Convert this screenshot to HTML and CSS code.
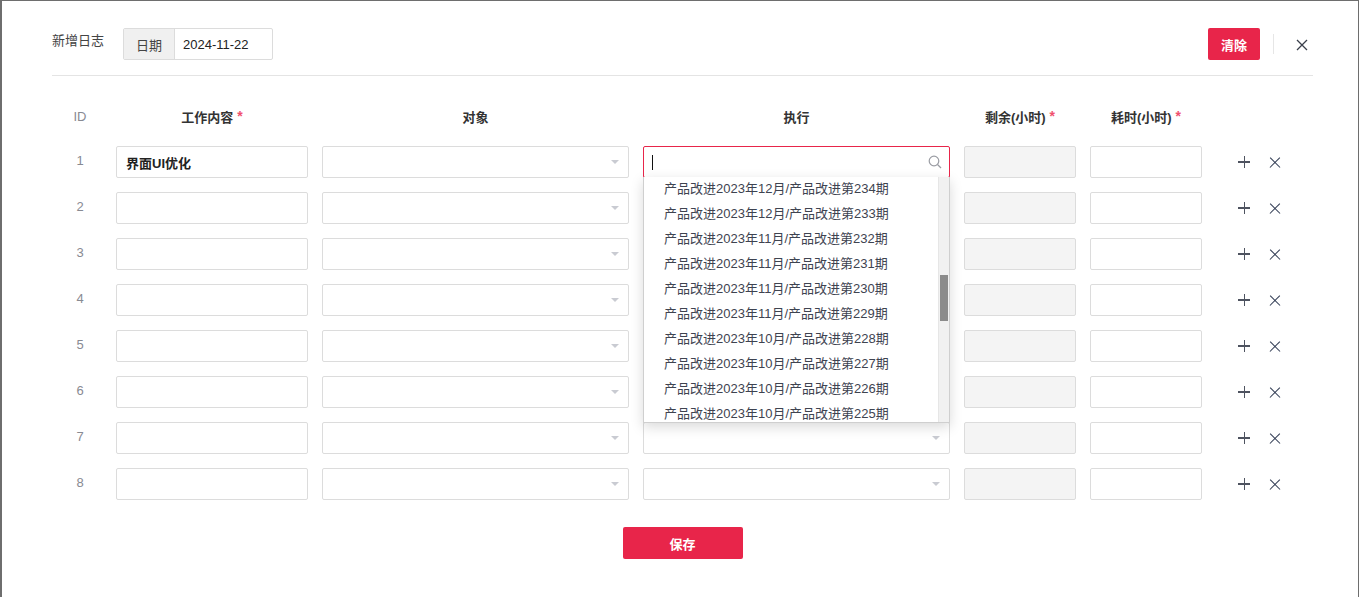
FILE: index.html
```html
<!DOCTYPE html>
<html lang="zh-CN">

<head>
  <meta charset="UTF-8" />
  <title>新增日志</title>
  <meta name="viewport" content="width=device-width, initial-scale=1.0" />
  <link rel="stylesheet" href="styles.css">
</head>

<body>
  <div class="dialog">
    <!-- 顶部：标题 + 日期 + 清除 -->
    <div class="dialog-head">
      <span class="title">新增日志</span>
      <div class="date-group">
        <span class="date-label">日期</span>
        <span class="date-value">2024-11-22</span>
      </div>
      <div class="head-actions">
        <button class="btn-red btn-clear">清除</button>
        <span class="head-sep"></span>
        <button class="icon-btn close-btn" title="关闭">
          <svg width="12" height="12" viewBox="0 0 12 12"><path d="M1 1L11 11M11 1L1 11" stroke="#3a3f4b" stroke-width="1.3" fill="none"/></svg>
        </button>
      </div>
    </div>

    <div class="log-table">
      <div class="th th-id">ID</div>
      <div class="th">工作内容 <i class="req">*</i></div>
      <div class="th">对象</div>
      <div class="th">执行</div>
      <div class="th">剩余(小时) <i class="req">*</i></div>
      <div class="th">耗时(小时) <i class="req">*</i></div>
      <div class="th"></div>

      <!-- row 1 -->
      <div class="td-id">1</div>
      <div class="field field-text">界面UI优化</div>
      <div class="field select"><span class="caret"></span></div>
      <div class="exec-cell">
        <div class="field search-box">
          <span class="text-cursor"></span>
          <svg class="search-icon" width="14" height="14" viewBox="0 0 14 14"><circle cx="6" cy="6" r="4.8" stroke="#9a9ca3" stroke-width="1.2" fill="none"/><path d="M9.5 9.5L13 13" stroke="#9a9ca3" stroke-width="1.3"/></svg>
        </div>
        <!-- 执行下拉 -->
        <div class="dropdown">
          <ul class="dropdown-list">
            <li>产品改进2023年12月/产品改进第234期</li>
            <li>产品改进2023年12月/产品改进第233期</li>
            <li>产品改进2023年11月/产品改进第232期</li>
            <li>产品改进2023年11月/产品改进第231期</li>
            <li>产品改进2023年11月/产品改进第230期</li>
            <li>产品改进2023年11月/产品改进第229期</li>
            <li>产品改进2023年10月/产品改进第228期</li>
            <li>产品改进2023年10月/产品改进第227期</li>
            <li>产品改进2023年10月/产品改进第226期</li>
            <li>产品改进2023年10月/产品改进第225期</li>
          </ul>
          <div class="scroll-track"><div class="scroll-thumb"></div></div>
        </div>
      </div>
      <div class="field readonly"></div>
      <div class="field"></div>
      <div class="row-actions"><span class="ico-plus"></span><span class="ico-del"></span></div>

      <!-- row 2 -->
      <div class="td-id">2</div>
      <div class="field"></div>
      <div class="field select"><span class="caret"></span></div>
      <div class="field select"><span class="caret"></span></div>
      <div class="field readonly"></div>
      <div class="field"></div>
      <div class="row-actions"><span class="ico-plus"></span><span class="ico-del"></span></div>

      <!-- row 3 -->
      <div class="td-id">3</div>
      <div class="field"></div>
      <div class="field select"><span class="caret"></span></div>
      <div class="field select"><span class="caret"></span></div>
      <div class="field readonly"></div>
      <div class="field"></div>
      <div class="row-actions"><span class="ico-plus"></span><span class="ico-del"></span></div>

      <!-- row 4 -->
      <div class="td-id">4</div>
      <div class="field"></div>
      <div class="field select"><span class="caret"></span></div>
      <div class="field select"><span class="caret"></span></div>
      <div class="field readonly"></div>
      <div class="field"></div>
      <div class="row-actions"><span class="ico-plus"></span><span class="ico-del"></span></div>

      <!-- row 5 -->
      <div class="td-id">5</div>
      <div class="field"></div>
      <div class="field select"><span class="caret"></span></div>
      <div class="field select"><span class="caret"></span></div>
      <div class="field readonly"></div>
      <div class="field"></div>
      <div class="row-actions"><span class="ico-plus"></span><span class="ico-del"></span></div>

      <!-- row 6 -->
      <div class="td-id">6</div>
      <div class="field"></div>
      <div class="field select"><span class="caret"></span></div>
      <div class="field select"><span class="caret"></span></div>
      <div class="field readonly"></div>
      <div class="field"></div>
      <div class="row-actions"><span class="ico-plus"></span><span class="ico-del"></span></div>

      <!-- row 7 -->
      <div class="td-id">7</div>
      <div class="field"></div>
      <div class="field select"><span class="caret"></span></div>
      <div class="field select"><span class="caret"></span></div>
      <div class="field readonly"></div>
      <div class="field"></div>
      <div class="row-actions"><span class="ico-plus"></span><span class="ico-del"></span></div>

      <!-- row 8 -->
      <div class="td-id">8</div>
      <div class="field"></div>
      <div class="field select"><span class="caret"></span></div>
      <div class="field select"><span class="caret"></span></div>
      <div class="field readonly"></div>
      <div class="field"></div>
      <div class="row-actions"><span class="ico-plus"></span><span class="ico-del"></span></div>
    </div>

    <div class="dialog-foot">
      <button class="btn-red btn-save">保存</button>
    </div>
  </div>
</body>

</html>
```

FILE: styles.css
```css
body {
  margin: 0;
  padding: 0;
  background: #6e6e6e;
  font-family: "Liberation Sans", "Noto Sans CJK SC", sans-serif;
  font-size: 13px;
  color: #333;
}

.dialog {
  margin: 1px 1px 0 2px;
  height: 596px;
  background: #fff;
  padding: 0 45px 0 50px;
  box-sizing: border-box;
}

/* 顶部 */
.dialog-head {
  display: flex;
  align-items: center;
  padding: 27px 0 15px;
  border-bottom: 1px solid #e4e4e4;
}

.title {
  color: #444;
  margin-top: -9px;
  width: 71px;
}

.date-group {
  display: flex;
  height: 32px;
  border: 1px solid #dcdcdc;
  border-radius: 2px;
  box-sizing: border-box;
}

.date-label {
  width: 50px;
  background: #f0f0f0;
  border-right: 1px solid #dcdcdc;
  display: flex;
  align-items: center;
  justify-content: center;
  color: #444;
}

.date-value {
  width: 97px;
  padding-left: 8px;
  box-sizing: border-box;
  display: flex;
  align-items: center;
  color: #222;
}

.head-actions {
  margin-left: auto;
  display: flex;
  align-items: center;
}

.btn-red {
  border: none;
  background: #e8254a;
  color: #fff;
  border-radius: 2px;
  font-family: inherit;
  font-size: 13px;
  font-weight: bold;
  cursor: pointer;
}

.btn-clear {
  width: 52px;
  height: 32px;
}

.head-sep {
  width: 1px;
  height: 20px;
  background: #e6e6e6;
  margin: 0 22px 0 13px;
}

.icon-btn {
  border: none;
  background: none;
  padding: 0;
  display: flex;
  cursor: pointer;
}

.close-btn {
  margin-top: 1px;
  margin-right: 5px;
}

/* 表格 */
.log-table {
  display: grid;
  grid-template-columns: 50px 192px 307px 307px 112px 112px auto;
  grid-auto-rows: 32px;
  column-gap: 14px;
  row-gap: 14px;
  margin-top: 24px;
}

.th {
  display: flex;
  align-items: center;
  justify-content: center;
  font-weight: bold;
  color: #333;
}

.th-id,
.td-id {
  font-weight: normal;
  color: #888a92;
  padding-left: 6px;
}

.req {
  font-style: normal;
  color: #f0506e;
  margin-left: 4px;
  font-size: 14px;
}

.td-id {
  display: flex;
  align-items: center;
  justify-content: center;
  margin-top: -3px;
}

.field {
  border: 1px solid #dcdcdc;
  border-radius: 2px;
  box-sizing: border-box;
  background: #fff;
  position: relative;
}

.field-text {
  display: flex;
  align-items: center;
  padding-left: 9px;
  font-weight: bold;
  color: #222;
}

.readonly {
  background: #f4f4f4;
}

.caret {
  position: absolute;
  right: 9px;
  top: 13px;
  border-left: 4px solid transparent;
  border-right: 4px solid transparent;
  border-top: 4px solid #c9cbd2;
}

.exec-cell {
  position: relative;
  z-index: 2;
}

.field.search-box {
  height: 32px;
  border-color: #e8254a;
  display: flex;
  align-items: center;
}

.text-cursor {
  width: 1px;
  height: 15px;
  background: #111;
  margin-left: 8px;
}

.search-icon {
  margin-left: auto;
  margin-right: 7px;
}

.dropdown {
  position: absolute;
  top: 31px;
  left: 0;
  width: 307px;
  height: 246px;
  background: #fff;
  border: 1px solid #cfcfcf;
  border-top: none;
  box-sizing: border-box;
  box-shadow: 0 4px 12px rgba(0, 0, 0, 0.15);
  overflow: hidden;
  display: flex;
}

.dropdown-list {
  list-style: none;
  margin: -1px 0 0;
  padding: 0;
  flex: 1;
}

.dropdown-list li {
  height: 25px;
  line-height: 25px;
  padding-left: 20px;
  color: #3e4350;
  white-space: nowrap;
}

.scroll-track {
  width: 10px;
  background: #f1f1f1;
  border-left: 1px solid #e6e6e6;
  position: relative;
}

.scroll-thumb {
  position: absolute;
  left: 1px;
  width: 8px;
  top: 98px;
  height: 46px;
  background: #8b8b8b;
}

/* 行操作 */
.row-actions {
  display: flex;
  align-items: center;
  gap: 19px;
  padding-left: 22px;
}

.ico-plus,
.ico-del {
  width: 12px;
  height: 12px;
  position: relative;
  cursor: pointer;
}

.ico-plus::before,
.ico-plus::after,
.ico-del::before,
.ico-del::after {
  content: "";
  position: absolute;
  background: #4e5360;
}

.ico-plus::before {
  left: 0;
  right: 0;
  top: 5px;
  height: 1.5px;
}

.ico-plus::after {
  top: 0;
  bottom: 0;
  left: 5.5px;
  width: 1.5px;
}

.ico-del::before,
.ico-del::after {
  left: -1px;
  right: -1px;
  top: 5.5px;
  height: 1.3px;
  background: #2f3a52;
}

.ico-del::before {
  transform: rotate(45deg);
}

.ico-del::after {
  transform: rotate(-45deg);
}

/* 底部 */
.dialog-foot {
  display: flex;
  justify-content: center;
  margin-top: 27px;
}

.btn-save {
  width: 120px;
  height: 32px;
}
```
